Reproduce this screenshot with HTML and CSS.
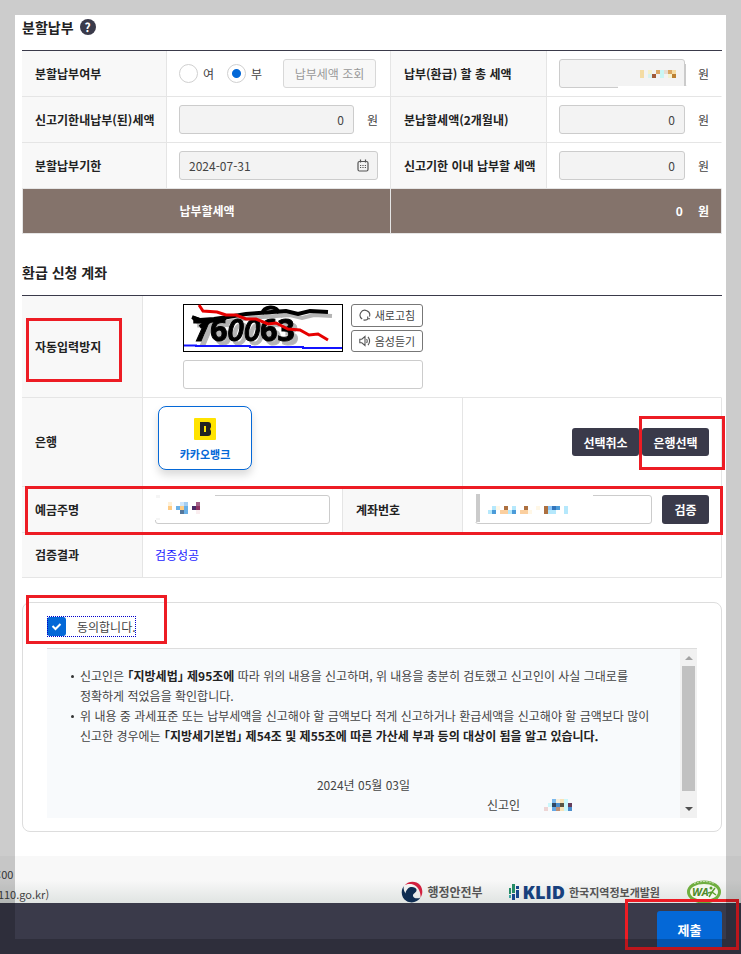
FILE: index.html
```html
<!DOCTYPE html>
<html lang="ko">
<head>
    <meta charset="UTF-8">
    <meta name="viewport" content="width=device-width, initial-scale=1.0">
    <title>분할납부 · 환급 신청 계좌</title>
    <link rel="stylesheet" href="styles.css">
</head>
<body>
    <main class="content">
        <!-- Installment section -->
        <section>
            <div class="section-title">
                <h2>분할납부</h2>
                <button type="button" class="help-btn" aria-label="도움말">?</button>
            </div>

            <table class="form-table pay-table">
                <colgroup>
                    <col class="col-label">
                    <col class="col-value">
                    <col class="col-label2">
                    <col class="col-value2">
                </colgroup>
                <tbody>
                    <tr>
                        <th scope="row">분할납부여부</th>
                        <td>
                            <div class="field">
                                <label class="radio"><input type="radio" name="split" value="Y"> 여</label>
                                <label class="radio"><input type="radio" name="split" value="N" checked> 부</label>
                                <button type="button" class="btn-lookup" disabled>납부세액 조회</button>
                            </div>
                        </td>
                        <th scope="row"><label for="total-tax">납부(환급) 할 총 세액</label></th>
                        <td>
                            <div class="field">
                                <div class="masked grow">
                                    <input type="text" id="total-tax" class="text-input amount" readonly>
                                    <svg class="mask mask-total" width="70" height="25" viewBox="0 0 70 25" shape-rendering="crispEdges">
                                        <rect x="1" y="22" width="69" height="3" fill="#f3f3f3"/>
                                        <rect x="1" y="23" width="69" height="2" fill="#fff"/>
                                        <rect x="67" y="1" width="2" height="22" fill="#cbcbcb"/>
                                        <path fill="#f4dca4" d="M23 7h4v8h-4zM55 7h4v4h-4z"/>
                                        <path fill="#f5f2cf" d="M31 7h4v4h-4zM51 11h4v4h-4z"/>
                                        <path fill="#d6f2f2" d="M31 11h4v4h-4z"/>
                                        <path fill="#c9f6f5" d="M43 7h4v8h-4z"/>
                                        <path fill="#e8ddd1" d="M47 7h4v4h-4z"/>
                                        <path fill="#a15a38" d="M35 11h4v4h-4z"/>
                                        <path fill="#dba663" d="M39 7h4v4h-4zM51 7h4v4h-4z"/>
                                        <path fill="#bd8132" d="M55 11h4v4h-4z"/>
                                    </svg>
                                </div>
                                <span class="unit">원</span>
                            </div>
                        </td>
                    </tr>
                    <tr>
                        <th scope="row"><label for="paid-tax">신고기한내납부(된)세액</label></th>
                        <td>
                            <div class="field">
                                <input type="text" id="paid-tax" class="text-input amount grow" value="0" readonly>
                                <span class="unit">원</span>
                            </div>
                        </td>
                        <th scope="row"><label for="split-tax">분납할세액(2개월내)</label></th>
                        <td>
                            <div class="field">
                                <input type="text" id="split-tax" class="text-input amount grow" value="0" readonly>
                                <span class="unit">원</span>
                            </div>
                        </td>
                    </tr>
                    <tr>
                        <th scope="row"><label for="due-date">분할납부기한</label></th>
                        <td>
                            <div class="masked">
                                <input type="text" id="due-date" class="text-input" value="2024-07-31" readonly>
                                <svg class="calendar" width="12" height="13" viewBox="0 0 12 13" fill="none" stroke="#555" stroke-width="1.2">
                                    <rect x="1" y="2.5" width="10" height="9.5" rx="1.5"/>
                                    <path d="M3.5 .5v3M8.500 .5v3"/>
                                    <path stroke-width="1" d="M3 6.500h1.200M5.400 6.500h1.200M7.800 6.500H9M3 8.500h1.200M5.400 8.500h1.200M7.800 8.500H9"/>
                                </svg>
                            </div>
                        </td>
                        <th scope="row"><label for="in-term-tax">신고기한 이내 납부할 세액</label></th>
                        <td>
                            <div class="field">
                                <input type="text" id="in-term-tax" class="text-input amount grow" value="0" readonly>
                                <span class="unit">원</span>
                            </div>
                        </td>
                    </tr>
                </tbody>
                <tfoot>
                    <tr>
                        <th scope="row" colspan="2">납부할세액</th>
                        <td colspan="2"><span>0</span><span class="unit">원</span></td>
                    </tr>
                </tfoot>
            </table>
        </section>

        <!-- Refund account section -->
        <section>
            <div class="section-title refund-title">
                <h2>환급 신청 계좌</h2>
            </div>

            <table class="form-table refund-table">
                <colgroup>
                    <col class="col-name">
                    <col class="col-owner">
                    <col class="col-number">
                    <col class="col-account">
                </colgroup>
                <tbody>
                    <tr>
                        <th scope="row" class="anchor">
                            <label for="captcha">자동입력방지</label>
                            <span class="marker marker-captcha"></span>
                        </th>
                        <td colspan="3">
                            <div class="captcha">
                                <svg class="captcha-img" width="160" height="48" viewBox="0 0 160 48" role="img" aria-label="자동입력방지 문자">
                                    <rect x="0.5" y="0.5" width="159" height="47" fill="#fff" stroke="#000"/>
                                    <g class="captcha-ink">
                                        <text x="10" y="37">76<tspan class="thin">00</tspan>63</text>
                                        <path d="M9 13l8 3 14-1 14-2 18-3 26-2 14-1 12 3 12-3 18 1" fill="none" stroke="#000" stroke-width="4"/>
                                        <path d="M10 14l13 4-6 5 10-6 16-3" fill="none" stroke="#000" stroke-width="4"/>
                                        <path d="M79 10c2-8 14-9 17-1" fill="none" stroke="#000" stroke-width="4"/>
                                    </g>
                                    <path d="M16 1l4 6 14 1 9 3 10 0 10 4 10 0 12 5 8-1 12 6 12 1 9 5 9-1 10 6" fill="none" stroke="#e60000" stroke-width="3"/>
                                    <path d="M1 41.500h12v.5h54v1h53v1h39" fill="none" stroke="#1414ff" stroke-width="2"/>
                                </svg>
                                <div class="captcha-btns">
                                    <button type="button" class="btn-small">
                                        <svg width="12" height="12" viewBox="0 0 12 12" fill="none" stroke="#555" stroke-width="1.1">
                                            <path d="M3.200 10A4.800 4.800 0 1 1 10.500 7.500"/>
                                            <path d="M4.500 10.900a5 5 0 0 0 5-1.500M11 9.800H8.700V7.500"/>
                                        </svg>
                                        새로고침
                                    </button>
                                    <button type="button" class="btn-small">
                                        <svg width="12" height="12" viewBox="0 0 12 12" fill="none" stroke="#555" stroke-width="1.1">
                                            <path d="M.8 4.200h2L6 1.500v9L2.800 7.800h-2z"/>
                                            <path d="M7.600 4q1.200 2 0 4M9 1.800q3.200 4.200 0 8.400"/>
                                        </svg>
                                        음성듣기
                                    </button>
                                </div>
                                <input type="text" id="captcha" class="text-input captcha-input">
                            </div>
                        </td>
                    </tr>
                    <tr>
                        <th scope="row">은행</th>
                        <td colspan="2" class="bank-cell">
                            <button type="button" class="bank-card">
                                <svg width="22" height="22" viewBox="0 0 22 22">
                                    <rect width="22" height="22" rx="1" fill="#ffe300"/>
                                    <path fill="#222" fill-rule="evenodd" d="M6 4h8q3 0 3 3v2l-1 2 1 2v2q0 3-3 3H6zM10 8v6h2V8z"/>
                                </svg>
                                카카오뱅크
                            </button>
                        </td>
                        <td class="anchor">
                            <div class="bank-actions">
                                <button type="button" class="btn-dark">선택취소</button>
                                <button type="button" class="btn-dark">은행선택</button>
                            </div>
                            <span class="marker marker-bank"></span>
                        </td>
                    </tr>
                    <tr class="anchor">
                        <th scope="row">
                            <label for="owner">예금주명</label>
                            <span class="marker marker-account"></span>
                        </th>
                        <td>
                            <div class="masked">
                                <input type="text" id="owner" class="text-input">
                                <svg class="mask mask-owner" width="60" height="26" viewBox="0 0 60 26" shape-rendering="crispEdges">
                                    <rect width="60" height="26" fill="#fff"/>
                                    <path fill="#f5f5f5" d="M1 1h4v3h-4zM1 24h4v2h-4z"/>
                                    <path fill="#fff0d6" d="M13 8h4v4h-4z"/>
                                    <path fill="#ffcc85" d="M13 12h4v4h-4zM25 12h4v4h-4z"/>
                                    <path fill="#cfe6fb" d="M25 8h4v4h-4z"/>
                                    <path fill="#a3cdf2" d="M29 8h4v4h-4z"/>
                                    <path fill="#6ab0e6" d="M21 12h4v4h-4zM29 12h4v8h-4z"/>
                                    <path fill="#55779b" d="M25 16h4v4h-4z"/>
                                    <path fill="#472c66" d="M37 12h4v4h-4z"/>
                                    <path fill="#a36187" d="M41 8h4v4h-4z"/>
                                    <path fill="#8f3262" d="M41 12h4v4h-4z"/>
                                    <path fill="#faeef0" d="M41 16h4v4h-4z"/>
                                </svg>
                            </div>
                        </td>
                        <th scope="row"><label for="account">계좌번호</label></th>
                        <td>
                            <div class="field account-field">
                                <div class="masked grow">
                                    <input type="text" id="account" class="text-input">
                                    <svg class="mask mask-account" width="118" height="28" viewBox="0 0 118 28" shape-rendering="crispEdges">
                                        <rect width="118" height="28" fill="#fff"/>
                                        <rect x="1" y="0" width="4" height="28" fill="#cbcbcb"/>
                                        <path fill="#b5e8fc" d="M17 12h4v4h-4zM13 16h4v4h-4zM37 12h4v4h-4zM33 16h4v4h-4zM73 16h4v4h-4zM77 16h4v4h-4zM89 12h4v8h-4z"/>
                                        <path fill="#4b9bd9" d="M17 16h4v4h-4zM37 16h4v4h-4zM81 12h4v4h-4z"/>
                                        <path fill="#fff7e6" d="M21 12h4v4h-4zM61 12h4v4h-4zM53 16h4v4h-4z"/>
                                        <path fill="#fbcf9f" d="M25 16h8v4h-8zM45 16h8v4h-8z"/>
                                        <path fill="#ad7040" d="M29 12h4v4h-4zM49 12h4v4h-4zM69 12h4v8h-4z"/>
                                        <path fill="#89c6fc" d="M73 12h4v4h-4z"/>
                                        <path fill="#3374ba" d="M77 12h4v4h-4z"/>
                                    </svg>
                                </div>
                                <button type="button" class="btn-dark btn-verify">검증</button>
                            </div>
                        </td>
                    </tr>
                    <tr>
                        <th scope="row">검증결과</th>
                        <td colspan="3" class="verify-result">검증성공</td>
                    </tr>
                </tbody>
            </table>
        </section>

        <!-- Agreement -->
        <section class="agree">
            <label class="agree-check"><input type="checkbox" checked> 동의합니다.</label>
            <span class="marker marker-agree"></span>
            <div class="terms">
                <div class="terms-body">
                    <ul>
                        <li>신고인은 <strong>「지방세법」 제95조에</strong> 따라 위의 내용을 신고하며, 위 내용을 충분히 검토했고 신고인이 사실 그대로를 정확하게 적었음을 확인합니다.</li>
                        <li>위 내용 중 과세표준 또는 납부세액을 신고해야 할 금액보다 적게 신고하거나 환급세액을 신고해야 할 금액보다 많이 신고한 경우에는 <strong>「지방세기본법」 제54조 및 제55조에 따른 가산세 부과 등의 대상이 됨을 알고 있습니다.</strong></li>
                    </ul>
                    <p class="terms-date">2024년 05월 03일</p>
                    <p class="terms-sign">신고인
                        <svg width="28" height="12" viewBox="0 0 28 12" shape-rendering="crispEdges">
                            <path fill="#edd5d5" d="M0 8h4v4H0z"/>
                            <path fill="#c9f7fc" d="M4 4h4v4H4zM20 0h4v12h-4z"/>
                            <path fill="#7ab8ed" d="M8 0h4v4H8z"/>
                            <path fill="#f7eedc" d="M12 0h4v4h-4z"/>
                            <path fill="#f7e3b8" d="M16 0h4v4h-4zM16 8h4v4h-4z"/>
                            <path fill="#304662" d="M8 4h4v4H8z"/>
                            <path fill="#4b8dcc" d="M12 4h4v4h-4zM24 8h4v4h-4z"/>
                            <path fill="#575442" d="M16 4h4v4h-4z"/>
                            <path fill="#653e5c" d="M24 4h4v4h-4z"/>
                            <path fill="#63a8e6" d="M8 8h4v4H8z"/>
                            <path fill="#bd8f76" d="M12 8h4v4h-4z"/>
                        </svg>
                    </p>
                </div>
                <div class="scrollbar">
                    <span class="arrow arrow-up"></span>
                    <span class="thumb"></span>
                    <span class="arrow arrow-down"></span>
                </div>
            </div>
        </section>
    </main>

    <footer class="footer">
        <div class="contact">
            <p class="hours">4:00</p>
            <p class="site">w.110.go.kr)</p>
        </div>
        <div class="logos">
            <span class="logo logo-mois">
                <svg width="22" height="22" viewBox="0 0 22 22">
                    <path fill="#d3203e" d="M3 5C7-.5 15-.5 19 4c3 4 3 9 .5 12.500C20 11 17 5 12 3.500 8.500 2.500 5 3 3 5z"/>
                    <path fill="#0f2d52" d="M3 5C-1 10 .5 17 5.500 20c5 3 11.500 1 14-3.500-3 1.500-7 1-7.500-1.500-.5-3 4-3 3.500-6.500-.5-2.500-6-3.500-8.500-1C5.500 9 4.500 11 4.500 12.500 3 10 2 7.500 3 5z"/>
                </svg>
                행정안전부
            </span>
            <span class="logo logo-klid">
                <svg width="10" height="16" viewBox="0 0 10 16">
                    <path fill="#258c66" d="M3 0h3v9H3zM0 4h2v6H0z"/>
                    <path fill="#17488c" d="M7 2h3v3H7zM7 6h3v8H7zM3 10h3v6H3z"/>
                    <path fill="#3ba6a1" d="M0 11h2v3H0z"/>
                </svg>
                <b>KLID</b> 한국지역정보개발원
            </span>
            <svg class="logo-wa" width="36" height="24" viewBox="0 0 36 24">
                <ellipse cx="18" cy="12" rx="17" ry="11.500" fill="#6fae3f"/>
                <ellipse cx="18" cy="12" rx="14" ry="8" fill="#f5f8ef"/>
                <text x="6" y="16">WA</text>
                <path d="M22 13l4-1 3-4M26 12l-3 5M26 12l4 3" fill="none" stroke="#5aa02c" stroke-width="1.500"/>
                <circle cx="25" cy="8" r="1.500" fill="#5aa02c"/>
                <path d="M8 3.500q10-4 20 0" fill="none" stroke="#d5e8c3" stroke-width="1" stroke-dasharray="2 1"/>
            </svg>
        </div>
    </footer>

    <div class="action-bar">
        <button type="submit" class="btn-submit">제출</button>
        <span class="marker marker-submit"></span>
    </div>
    <div class="frame"></div>
</body>
</html>
```

FILE: styles.css
```css
* {
    box-sizing: border-box;
}

body {
    margin: 0;
    min-height: 100vh;
    display: flex;
    flex-direction: column;
    background-color: #fff;
    color: #444;
    font-family: "Noto Sans CJK KR", "Noto Sans", sans-serif;
    font-size: 12px;
    line-height: 20px;
    overflow-x: hidden;
}

button,
input {
    font-family: inherit;
    font-size: 12px;
    color: inherit;
}

button {
    padding: 0;
    border: 0;
    cursor: pointer;
    white-space: nowrap;
}

p,
ul,
h2 {
    margin: 0;
    padding: 0;
}

.content {
    padding: 0 19px 24px 22px;
}

/* Section headings */
.section-title {
    display: flex;
    align-items: center;
    gap: 6px;
    padding: 15px 0 11px;
}

.refund-title {
    padding-top: 26px;
}

h2 {
    font-size: 14px;
    font-weight: bold;
    line-height: 24px;
    color: #222;
}

.help-btn {
    width: 16px;
    height: 16px;
    border-radius: 50%;
    background-color: #3a3a4a;
    color: #fff;
    font-weight: bold;
    line-height: 16px;
}

/* Form tables */
.form-table {
    width: 100%;
    table-layout: fixed;
    border-collapse: separate;
    border-spacing: 0;
    border-top: 1px solid #3a3a4a;
}

.form-table th,
.form-table td {
    height: 46px;
    padding: 0 12px;
    border-right: 1px solid #e5e5e5;
    border-bottom: 1px solid #e5e5e5;
    text-align: left;
}

.form-table th {
    padding-left: 13px;
    background-color: #f8f8f8;
    color: #222;
    font-weight: bold;
    white-space: nowrap;
}

.pay-table tbody td:last-child {
    border-right-color: transparent;
}

.col-label { width: 145px; }
.col-value { width: 224px; }
.col-label2 { width: 156px; }
.col-name { width: 121px; }
.col-owner { width: 200px; }
.col-number { width: 120px; }

.pay-table tfoot th,
.pay-table tfoot td {
    height: 45px;
    background-color: #84736b;
    color: #fff;
}

.pay-table tfoot th {
    text-align: center;
    border-left: 1px solid #e5e5e5;
}

.pay-table tfoot td {
    text-align: right;
    font-weight: bold;
}

.pay-table tfoot .unit {
    margin-left: 15px;
}

.field {
    display: flex;
    align-items: center;
    gap: 13px;
}

.grow {
    flex: 1;
    min-width: 0;
}

.text-input {
    display: block;
    width: 100%;
    height: 29px;
    padding: 0 9px;
    border: 1px solid #ccc;
    border-radius: 3px;
    background-color: #fff;
}

.text-input:read-only {
    background-color: #f3f3f3;
}

.amount {
    text-align: right;
}

.radio {
    display: flex;
    align-items: center;
    gap: 5px;
}

.radio input {
    appearance: none;
    width: 19px;
    height: 19px;
    margin: 0;
    border: 1px solid #d0d0d0;
    border-radius: 50%;
    background-color: #fff;
}

.radio input:checked {
    background-image: radial-gradient(circle, #0468d7 4px, transparent 5px);
}

.btn-lookup {
    flex: 1;
    height: 29px;
    margin: 0 2px 0 8px;
    border: 1px solid #d8d8d8;
    border-radius: 3px;
    background-color: #f8f8f8;
    color: #999;
}

.masked,
.anchor {
    position: relative;
}

.calendar {
    position: absolute;
    top: 8px;
    right: 9px;
}

/* Blanked out personal data */
.mask {
    position: absolute;
}

.mask-total {
    top: 4px;
    right: -2px;
}

.mask-owner,
.mask-account {
    top: -1px;
    left: 0;
}

/* Captcha */
.refund-table tbody tr:first-child td {
    height: 102px;
    border-right-color: transparent;
}

.refund-table .bank-cell {
    height: 89px;
    padding: 8px 15px 0;
    vertical-align: top;
}

.refund-table tr:last-child th,
.refund-table tr:last-child td {
    height: 45px;
}

.captcha {
    display: grid;
    grid-template-columns: 160px 72px;
    gap: 8px;
    padding-left: 28px;
}

.captcha-img {
    display: block;
}

.captcha-ink {
    filter: drop-shadow(4px 4px 0 #b5b5b5);
    font-family: "Open Sans", sans-serif;
    font-size: 30px;
    font-weight: bold;
}

.captcha-ink text {
    stroke: #000;
    stroke-width: 1px;
}

.captcha-ink .thin {
    font-style: italic;
    font-weight: 600;
}

.captcha-btns {
    display: flex;
    flex-direction: column;
    gap: 3px;
}

.btn-small {
    display: flex;
    flex: 1;
    align-items: center;
    justify-content: center;
    gap: 4px;
    border: 1px solid #777;
    border-radius: 3px;
    background-color: #fff;
    font-size: 11px;
    line-height: 16px;
}

.captcha-input {
    grid-column: 1 / 3;
}

/* Bank */
.bank-card {
    display: flex;
    flex-direction: column;
    align-items: center;
    gap: 4px;
    width: 94px;
    height: 64px;
    padding-top: 11px;
    border: 1px solid #0468d7;
    border-radius: 8px;
    background-color: #fff;
    box-shadow: 0 5px 8px rgba(0, 0, 0, 0.15);
    color: #0468d7;
    font-size: 11px;
    font-weight: bold;
    line-height: 20px;
}

.bank-actions {
    display: flex;
    justify-content: flex-end;
    gap: 3px;
}

.btn-dark {
    width: 67px;
    height: 28px;
    border-radius: 3px;
    background-color: #3a3a4a;
    color: #fff;
    font-weight: bold;
}

.account-field {
    gap: 10px;
}

.btn-verify {
    width: 47px;
    height: 29px;
}

.refund-table .verify-result {
    color: #1a1aff;
}

/* Agreement */
.agree {
    position: relative;
    margin-top: 24px;
    padding: 13px 24px;
    border: 1px solid #ddd;
    border-radius: 8px;
}

.agree-check {
    display: inline-flex;
    align-items: center;
    gap: 11px;
    height: 21px;
    margin-bottom: 11px;
    outline: 1px dotted #0000cc;
    outline-offset: -1px;
    vertical-align: top;
}

.agree-check input {
    appearance: none;
    width: 19px;
    height: 19px;
    margin: 0;
    border-radius: 3px;
    background: #0468d7 url("data:image/svg+xml,%3Csvg xmlns='http://www.w3.org/2000/svg' viewBox='0 0 19 19'%3E%3Cpath d='M5.500 9l3 3 5-5' fill='none' stroke='white' stroke-width='2'/%3E%3C/svg%3E");
}

.terms {
    display: flex;
    border-top: 1px solid #ddd;
    background-color: #f8fafc;
}

.terms-body {
    flex: 1;
    padding: 17px 0 3px;
}

.terms ul {
    padding: 0 20px 0 33px;
    list-style: none;
    word-break: keep-all;
}

.terms li {
    position: relative;
}

.terms li::before {
    content: "";
    position: absolute;
    top: 9px;
    left: -9px;
    width: 3px;
    height: 3px;
    border-radius: 50%;
    background-color: #333;
}

.terms strong {
    color: #222;
    font-feature-settings: "halt";
}

.terms-date {
    margin-top: 29px;
    text-align: center;
}

.terms-sign {
    display: flex;
    align-items: center;
    justify-content: flex-end;
    gap: 24px;
    padding-right: 108px;
}

.scrollbar {
    display: flex;
    flex-direction: column;
    align-items: center;
    width: 17px;
    padding: 7px 0;
    background-color: #f1f1f1;
}

.arrow {
    border: 4px solid transparent;
}

.arrow-up {
    border-top: 0;
    border-bottom-color: #a3a3a3;
}

.arrow-down {
    border-bottom: 0;
    border-top-color: #505050;
}

.thumb {
    flex: 1;
    width: 13px;
    margin: 6px 0 16px;
    background-color: #c1c1c1;
}

/* Footer */
.footer {
    display: flex;
    flex: 1;
    justify-content: space-between;
    padding: 8px 19px 51px 0;
    background: linear-gradient(#f8f8f8 24px, #dfe3e1 48px);
}

.contact {
    height: 39px;
    font-size: 11px;
    white-space: nowrap;
}

.hours {
    margin-left: -8px;
}

.site {
    margin-left: -14px;
}

.logos {
    display: flex;
    align-items: center;
    gap: 26px;
    height: 39px;
    padding-top: 16px;
}

.logo {
    display: flex;
    align-items: center;
    gap: 4px;
    color: #555;
    font-size: 11px;
    font-weight: bold;
}

.logo-mois {
    font-size: 12px;
}

.logo-klid b {
    color: #17407c;
    font-family: "Open Sans", sans-serif;
    font-size: 18px;
}

.logo-wa {
    font: italic bold 11px "Open Sans", sans-serif;
    fill: #4d8a2a;
}

/* Bottom bar */
.action-bar {
    position: fixed;
    right: 0;
    bottom: 0;
    left: 0;
    display: flex;
    justify-content: flex-end;
    padding: 8px 19px 7px;
    background-color: #3a3a4a;
}

.btn-submit {
    width: 65px;
    height: 36px;
    border-radius: 3px 3px 0 0;
    background-color: #0468d7;
    color: #fff;
    font-size: 13px;
    font-weight: bold;
}

/* Translucent edge round the window */
.frame {
    position: fixed;
    inset: 0;
    border: 15px solid rgba(0, 0, 0, 0.2);
    pointer-events: none;
}

/* Red guide boxes */
.marker {
    position: absolute;
    border: 3px solid #ed1c24;
    pointer-events: none;
}

.marker-captcha {
    inset: 22px 20px 15px 4px;
}

.marker-bank {
    top: 18px;
    right: -4px;
    width: 86px;
    height: 54px;
}

.marker-account {
    inset: -1px -1px -2px 3px;
}

.marker-agree {
    top: -8px;
    left: 3px;
    width: 141px;
    height: 49px;
}

.marker-submit {
    top: -4px;
    right: 2px;
    width: 114px;
    height: 51px;
}
```
